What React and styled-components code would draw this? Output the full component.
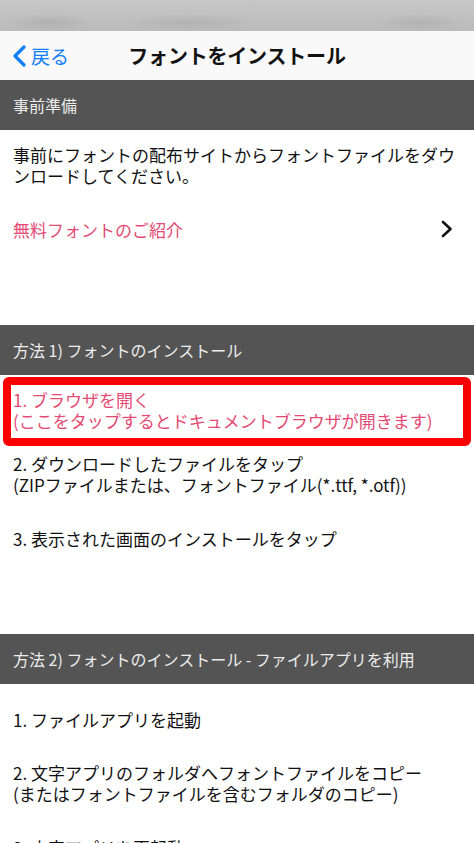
import React from "react";
import styled, { createGlobalStyle } from "styled-components";

const GlobalStyle = createGlobalStyle`
  html, body {
    margin: 0;
    padding: 0;
    background: #ffffff;
  }
  body {
    font-family: "Noto Sans CJK JP", "Noto Sans", sans-serif;
    -webkit-font-smoothing: antialiased;
  }
`;

const sections = [
  {
    title: "事前準備",
    items: [
      {
        lines: ["事前にフォントの配布サイトからフォントファイルをダウンロードしてください。"],
      },
      { lines: ["無料フォントのご紹介"], link: true, chevron: true },
    ],
  },
  {
    title: "方法 1) フォントのインストール",
    items: [
      {
        lines: ["1. ブラウザを開く", "(ここをタップするとドキュメントブラウザが開きます)"],
        link: true,
        marked: true,
      },
      {
        lines: ["2. ダウンロードしたファイルをタップ", "(ZIPファイルまたは、フォントファイル(*.ttf, *.otf))"],
      },
      { lines: ["3. 表示された画面のインストールをタップ"] },
    ],
  },
  {
    title: "方法 2) フォントのインストール - ファイルアプリを利用",
    items: [
      { lines: ["1. ファイルアプリを起動"] },
      {
        lines: ["2. 文字アプリのフォルダへフォントファイルをコピー", "(またはフォントファイルを含むフォルダのコピー)"],
      },
      { lines: ["3. 文字アプリを再起動"] },
    ],
  },
];

const App = () => {
  return (
    <Page>
      <GlobalStyle />
      <StatusBar />
      <NavBar>
        <BackButton>
          <svg width="16" height="22" viewBox="0 0 16 22">
            <path
              d="M13 2 L4 11 L13 20"
              fill="none"
              stroke="#157efb"
              strokeWidth="3.2"
              strokeLinecap="round"
              strokeLinejoin="round"
            />
          </svg>
          <span>戻る</span>
        </BackButton>
        <NavTitle>フォントをインストール</NavTitle>
        <div />
      </NavBar>

      {sections.map((section) => (
        <Section key={section.title}>
          <SectionHeader>{section.title}</SectionHeader>
          <CellList>
            {section.items.map((item, idx) => (
              <Cell key={idx}>
                <CellText $link={item.link}>
                  {item.lines.map((line) => (
                    <Line key={line}>{line}</Line>
                  ))}
                </CellText>
                {item.chevron && (
                  <Chevron width="14" height="18" viewBox="0 0 14 18">
                    <path
                      d="M3 2 L10.5 9 L3 16"
                      fill="none"
                      stroke="#111"
                      strokeWidth="2.6"
                      strokeLinecap="round"
                      strokeLinejoin="round"
                    />
                  </Chevron>
                )}
                {item.marked && <Highlight />}
              </Cell>
            ))}
          </CellList>
          <SectionFooter />
        </Section>
      ))}
    </Page>
  );
};

const Page = styled.div`
  width: 474px;
  height: 843px;
  background: #ffffff;
  overflow: hidden;
`;

const StatusBar = styled.div`
  height: 31px;
  background: radial-gradient(ellipse 40px 8px at 50px 22px, rgba(150, 150, 150, 0.35), transparent),
    radial-gradient(ellipse 60px 8px at 190px 22px, rgba(150, 150, 150, 0.3), transparent),
    radial-gradient(ellipse 40px 8px at 420px 22px, rgba(150, 150, 150, 0.3), transparent),
    linear-gradient(#c7c7c7, #bababa);
`;

const NavBar = styled.div`
  display: grid;
  grid-template-columns: 1fr auto 1fr;
  align-items: center;
  height: 49px;
  background: #f9f9f9;
`;

const BackButton = styled.div`
  display: flex;
  align-items: center;
  gap: 4px;
  padding-left: 11px;
  color: #157efb;
  font-size: 19px;
  line-height: 1;
`;

const NavTitle = styled.div`
  font-size: 20px;
  font-weight: 700;
  color: #111111;
  letter-spacing: -0.2px;
`;

const Section = styled.section`
  display: flex;
  flex-direction: column;
`;

const SectionHeader = styled.div`
  display: flex;
  align-items: center;
  height: 50px;
  padding-left: 13px;
  background: #545454;
  color: #ececec;
  font-size: 16px;
`;

const CellList = styled.div`
  display: flex;
  flex-direction: column;
  padding-top: 3px;
`;

const Cell = styled.div`
  position: relative;
  display: flex;
  align-items: center;
  height: 64px;
  padding: 0 11px 0 13px;
`;

const CellText = styled.div`
  flex: 1;
  min-width: 0;
  font-size: 17px;
  line-height: 21px;
  color: ${(props) => (props.$link ? "#e44a73" : "#111111")};
`;

const Line = styled.div``;

const Chevron = styled.svg`
  flex-shrink: 0;
  margin-right: 9px;
`;

const Highlight = styled.div`
  position: absolute;
  top: -1px;
  bottom: -4px;
  left: 3px;
  right: 3px;
  border: 8px solid #fc0000;
  border-radius: 6px;
  pointer-events: none;
`;

const SectionFooter = styled.div`
  height: 64px;
`;

export default App;
